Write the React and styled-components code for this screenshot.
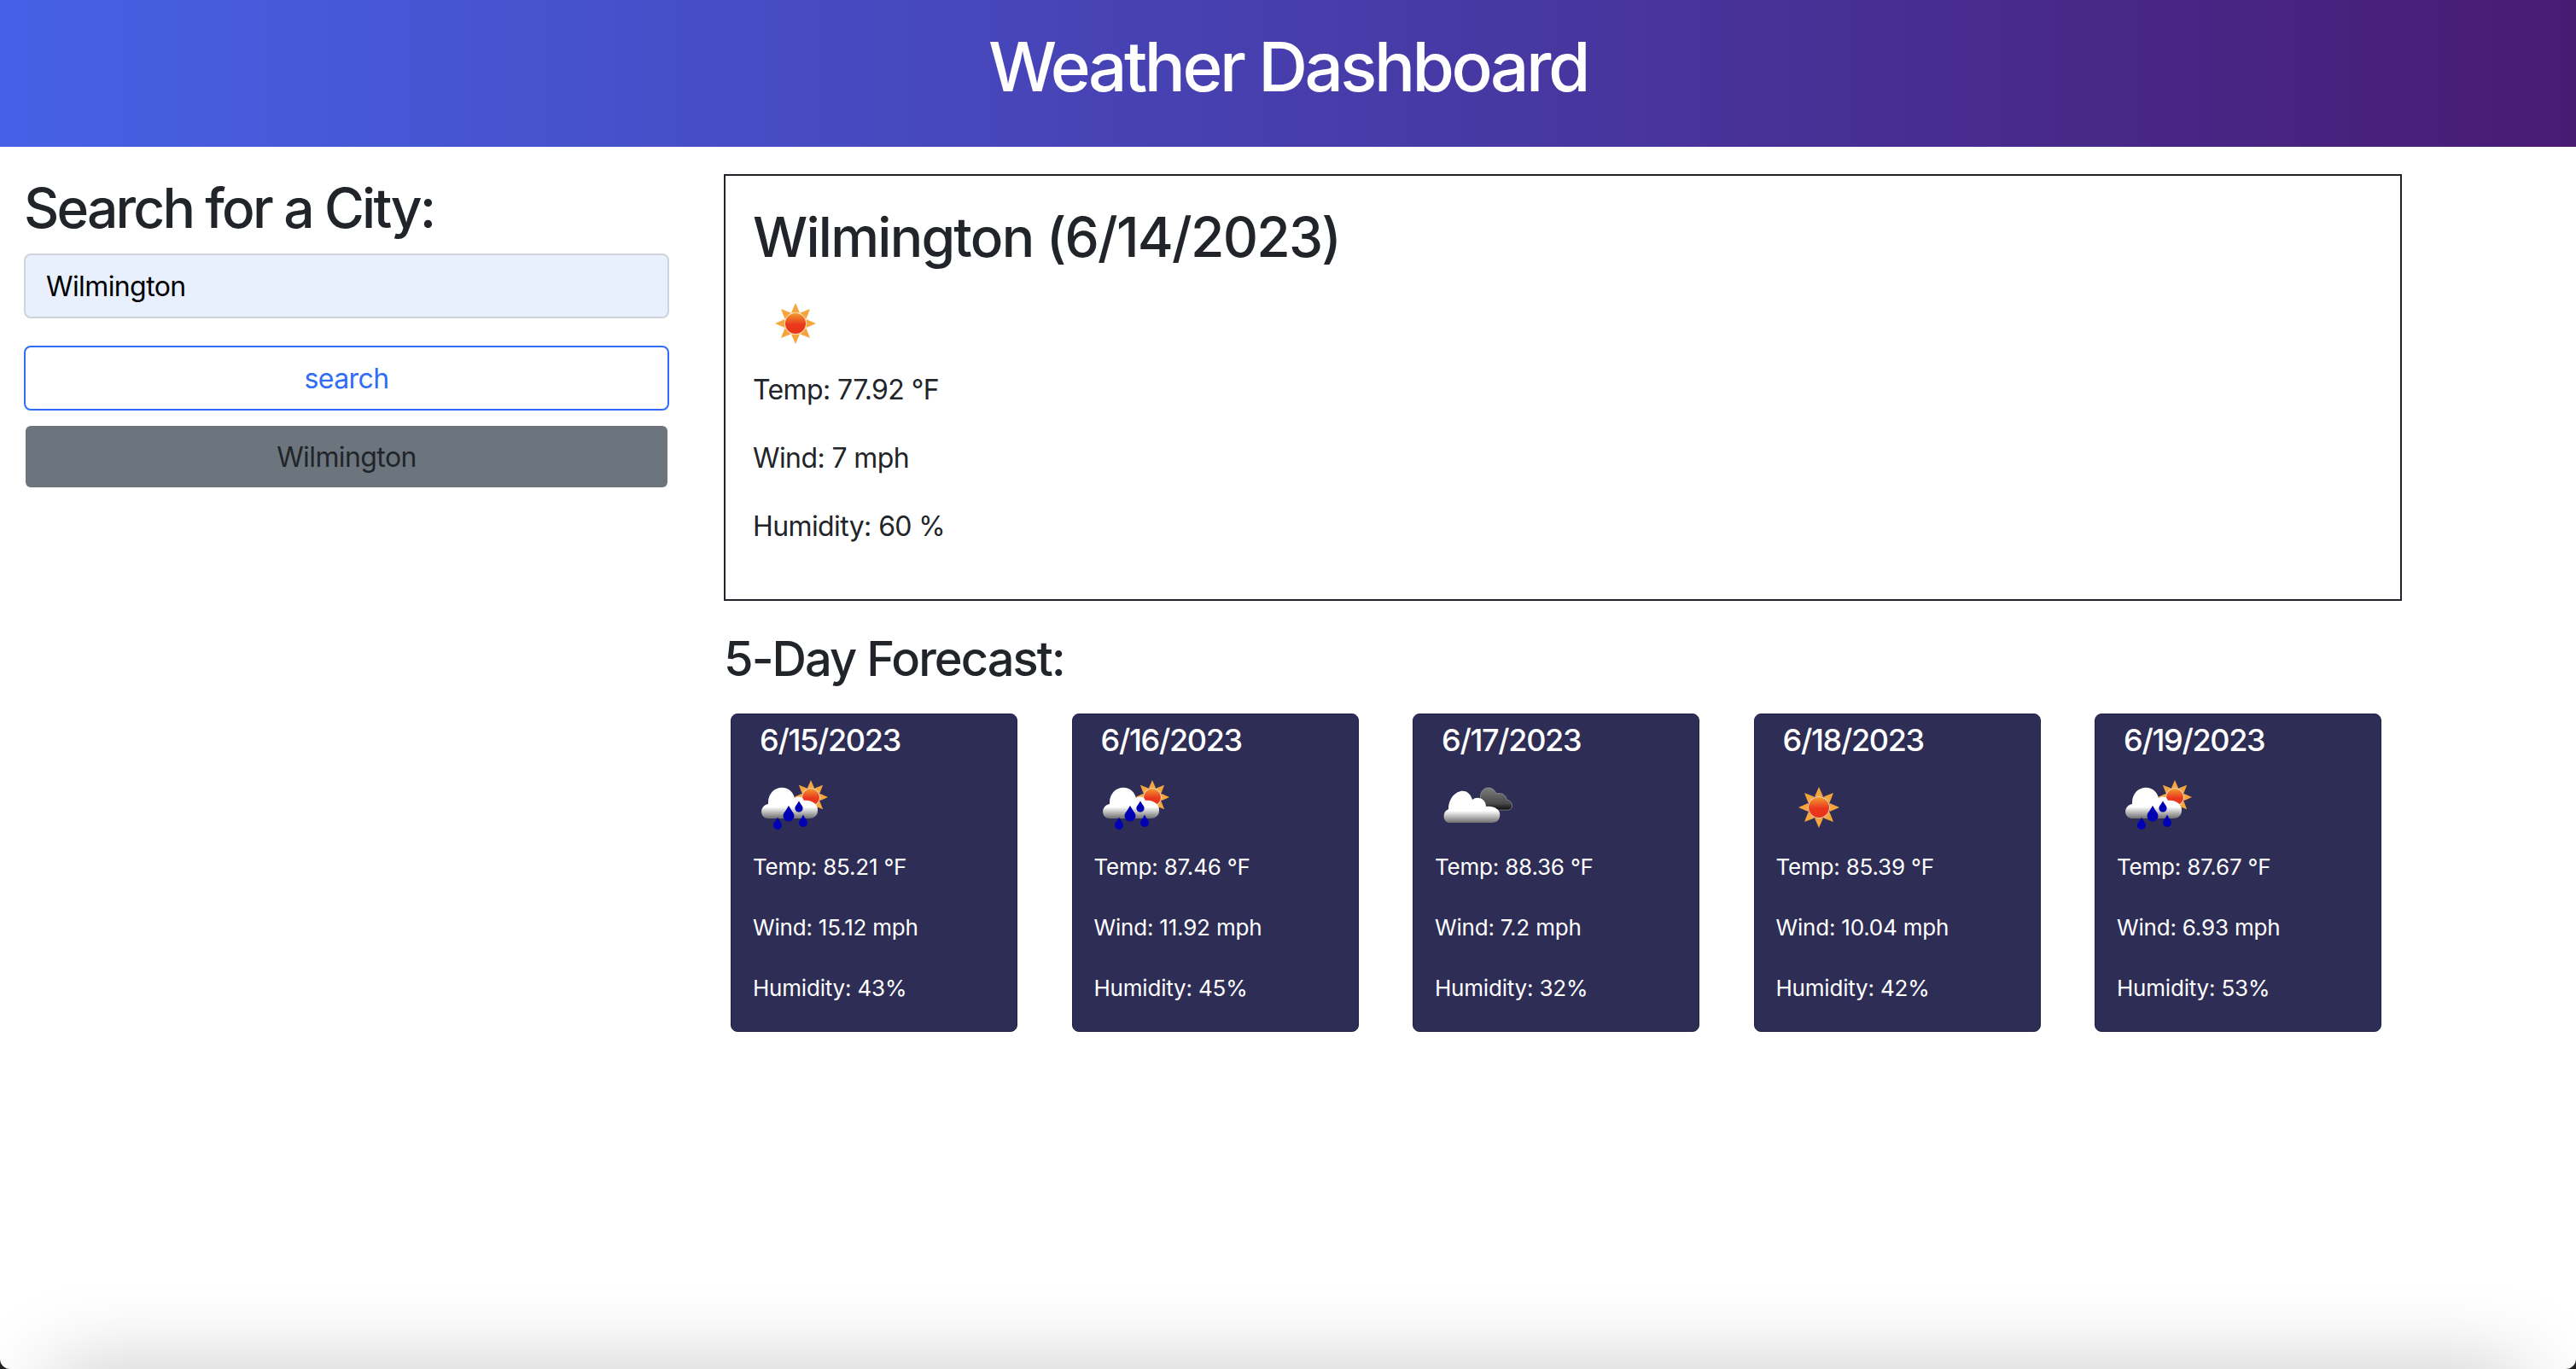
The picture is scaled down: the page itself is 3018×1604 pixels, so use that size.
import React from "react";
import styled, { createGlobalStyle } from "styled-components";

const GlobalStyle = createGlobalStyle`
  * {
    box-sizing: border-box;
  }
  body {
    margin: 0;
    background: #fff;
    color: #212529;
    font-family: Inter, "Liberation Sans", sans-serif;
    font-size: 32px;
    line-height: 48px;
    letter-spacing: -0.6px;
  }
`;

const forecast = [
  { date: "6/15/2023", icon: "rain", temp: "85.21", wind: "15.12", humidity: "43" },
  { date: "6/16/2023", icon: "rain", temp: "87.46", wind: "11.92", humidity: "45" },
  { date: "6/17/2023", icon: "clouds", temp: "88.36", wind: "7.2", humidity: "32" },
  { date: "6/18/2023", icon: "sun", temp: "85.39", wind: "10.04", humidity: "42" },
  { date: "6/19/2023", icon: "rain", temp: "87.67", wind: "6.93", humidity: "53" },
];

function SunShape({ cx, cy, r, ray }) {
  const angles = [0, 45, 90, 135, 180, 225, 270, 315];
  return (
    <g>
      {angles.map((a) => (
        <path
          key={a}
          d={`M${cx - r * 0.42} ${cy - r * 1.05} L${cx} ${cy - ray} L${cx + r * 0.42} ${cy - r * 1.05} Z`}
          fill="#f4a63c"
          transform={`rotate(${a} ${cx} ${cy})`}
        />
      ))}
      <circle cx={cx} cy={cy} r={r + 1} fill="#fbd9b0" />
      <circle cx={cx} cy={cy} r={r} fill="url(#sunFill)" />
    </g>
  );
}

function Drop({ x, y, r }) {
  return (
    <path
      d={`M${x} ${y - r * 1.9} C${x + r * 0.4} ${y - r} ${x + r} ${y - r * 0.6} ${x + r} ${y} A${r} ${r} 0 1 1 ${x - r} ${y} C${x - r} ${y - r * 0.6} ${x - r * 0.4} ${y - r} ${x} ${y - r * 1.9} Z`}
      fill="#0000b4"
    />
  );
}

function WeatherIcon({ type }) {
  return (
    <IconSvg viewBox="0 0 100 100">
      <defs>
        <linearGradient id="sunFill" x1="0" y1="0" x2="0" y2="1">
          <stop offset="0" stopColor="#f39a2e" />
          <stop offset="0.55" stopColor="#e9391f" />
          <stop offset="1" stopColor="#e8331f" />
        </linearGradient>
        <linearGradient id="cloudFill" x1="0" y1="0" x2="0" y2="1">
          <stop offset="0" stopColor="#fff" />
          <stop offset="0.62" stopColor="#fff" />
          <stop offset="1" stopColor="#6f6f6f" />
        </linearGradient>
        <linearGradient id="darkFill" x1="0" y1="0" x2="0" y2="1">
          <stop offset="0" stopColor="#7c7c7c" />
          <stop offset="0.7" stopColor="#4a4a4a" />
          <stop offset="1" stopColor="#0d0d0d" />
        </linearGradient>
        <filter id="soft" x="-10%" y="-10%" width="120%" height="120%">
          <feGaussianBlur stdDeviation="0.55" />
        </filter>
      </defs>
      <g filter="url(#soft)">
        {type === "sun" && <SunShape cx={50} cy={50} r={12} ray={24} />}
        {type === "rain" && (
          <>
            <SunShape cx={68} cy={38} r={10} ray={20} />
            <path
              d="M18 63 C8 63 7 48 18 46 C17 24 44 20 49 39 C54 36 59 38 60 42 C68 41 77 46 76 54 C76 60 71 63 66 63 Z"
              fill="url(#cloudFill)"
            />
            <Drop x={42} y={60} r={6.5} />
            <Drop x={54} y={51} r={4.6} />
            <Drop x={29} y={71} r={5} />
            <Drop x={59} y={68} r={5} />
          </>
        )}
        {type === "clouds" && (
          <>
            <path
              d="M54 42 C50 26 68 22 72 34 C78 32 84 36 84 41 C92 42 93 53 85 53 L60 53 Z"
              fill="url(#darkFill)"
              stroke="#a8a8a8"
              strokeWidth="0.6"
            />
            <path
              d="M18 68 C9 68 8 55 16 52 C16 32 38 22 44 41 C50 36 60 40 60 49 C70 48 78 53 76 61 C75 66 71 68 67 68 Z"
              fill="url(#cloudFill)"
            />
          </>
        )}
      </g>
    </IconSvg>
  );
}

export default function App() {
  return (
    <>
      <GlobalStyle />
      <Header>
        <h1>Weather Dashboard</h1>
      </Header>
      <Main>
        <Sidebar>
          <SearchTitle>Search for a City:</SearchTitle>
          <CityInput defaultValue="Wilmington" />
          <SearchButton>search</SearchButton>
          <HistoryButton>Wilmington</HistoryButton>
        </Sidebar>
        <Content>
          <Today>
            <CityTitle>Wilmington (6/14/2023)</CityTitle>
            <TodayIcon>
              <WeatherIcon type="sun" />
            </TodayIcon>
            <Stat>Temp: 77.92 °F</Stat>
            <Stat>Wind: 7 mph</Stat>
            <Stat>Humidity: 60 %</Stat>
          </Today>
          <ForecastTitle>5-Day Forecast:</ForecastTitle>
          <CardRow>
            {forecast.map((day) => (
              <Card key={day.date}>
                <CardDate>{day.date}</CardDate>
                <WeatherIcon type={day.icon} />
                <CardStat>Temp: {day.temp} °F</CardStat>
                <CardStat>Wind: {day.wind} mph</CardStat>
                <CardStat>Humidity: {day.humidity}%</CardStat>
              </Card>
            ))}
          </CardRow>
        </Content>
      </Main>
      <WindowEdge />
    </>
  );
}

const Header = styled.header`
  height: 172px;
  display: flex;
  align-items: center;
  justify-content: center;
  padding-bottom: 16px;
  background: linear-gradient(to right, #4661e6, #481b73);
  color: #fff;

  h1 {
    margin: 0;
    font-size: 80px;
    font-weight: 500;
    line-height: 1.2;
    letter-spacing: -3.5px;
  }
`;

const Main = styled.main`
  display: grid;
  grid-template-columns: 756px 1966px;
  column-gap: 64px;
  padding: 32px 0 0 28px;
`;

const Sidebar = styled.aside`
  display: flex;
  flex-direction: column;
`;

const SearchTitle = styled.h2`
  margin: 2px 0 14px;
  font-size: 64px;
  font-weight: 500;
  line-height: 1.2;
  letter-spacing: -2.8px;
`;

const CityInput = styled.input`
  height: 76px;
  padding: 2px 24px 0;
  border: 2px solid #ced4da;
  border-radius: 8px;
  background: #e8f0fe;
  color: #000;
  font: inherit;
  letter-spacing: inherit;
  outline: none;
`;

const SearchButton = styled.button`
  height: 76px;
  margin-top: 32px;
  padding: 2px 0 0;
  border: 2px solid #316cf4;
  border-radius: 8px;
  background: #fff;
  color: #316cf4;
  font: inherit;
  letter-spacing: inherit;
`;

const HistoryButton = styled.button`
  height: 72px;
  margin: 18px 2px 0;
  padding: 2px 0 0;
  border: none;
  border-radius: 6px;
  background: #6c757d;
  color: #212529;
  font: inherit;
  letter-spacing: inherit;
`;

const Content = styled.section`
  display: flex;
  flex-direction: column;
`;

const Today = styled.div`
  height: 500px;
  padding: 34px 32px;
  border: 2px solid #212529;
`;

const CityTitle = styled.h2`
  margin: 0 0 12px;
  font-size: 64px;
  font-weight: 500;
  line-height: 1.2;
  letter-spacing: -1.75px;
`;

const TodayIcon = styled.div`
  margin-bottom: 4px;
`;

const IconSvg = styled.svg`
  display: block;
  width: 100px;
  height: 100px;
`;

const Stat = styled.p`
  margin: 0 0 32px;
`;

const ForecastTitle = styled.h3`
  margin: 35px 0 0;
  font-size: 56px;
  font-weight: 500;
  line-height: 1.2;
  letter-spacing: -1.95px;
`;

const CardRow = styled.div`
  display: flex;
  gap: 63.5px;
  margin: 30px 0 0 8px;
`;

const Card = styled.article`
  width: 336px;
  height: 373px;
  padding: 0 25px;
  border: 1px solid #1f2148;
  border-radius: 8px;
  background: #2e2d55;
  color: #fff;
`;

const CardDate = styled.h5`
  margin: 6px 0 5px 8px;
  font-size: 36px;
  font-weight: 500;
  line-height: 48px;
  letter-spacing: -1.3px;
`;

const CardStat = styled.p`
  margin: 0 0 32px;
  font-size: 26px;
  line-height: 39px;
  letter-spacing: -0.2px;
`;

const WindowEdge = styled.div`
  position: fixed;
  inset: 0;
  overflow: hidden;
  pointer-events: none;
  border-radius: 0 0 12px 12px;
  box-shadow: 0 0 0 40px #222;

  &::after {
    content: "";
    position: absolute;
    top: 100%;
    left: 60px;
    right: 60px;
    height: 100px;
    box-shadow: 0 0 100px 0 rgba(0, 0, 0, 0.22);
  }
`;
